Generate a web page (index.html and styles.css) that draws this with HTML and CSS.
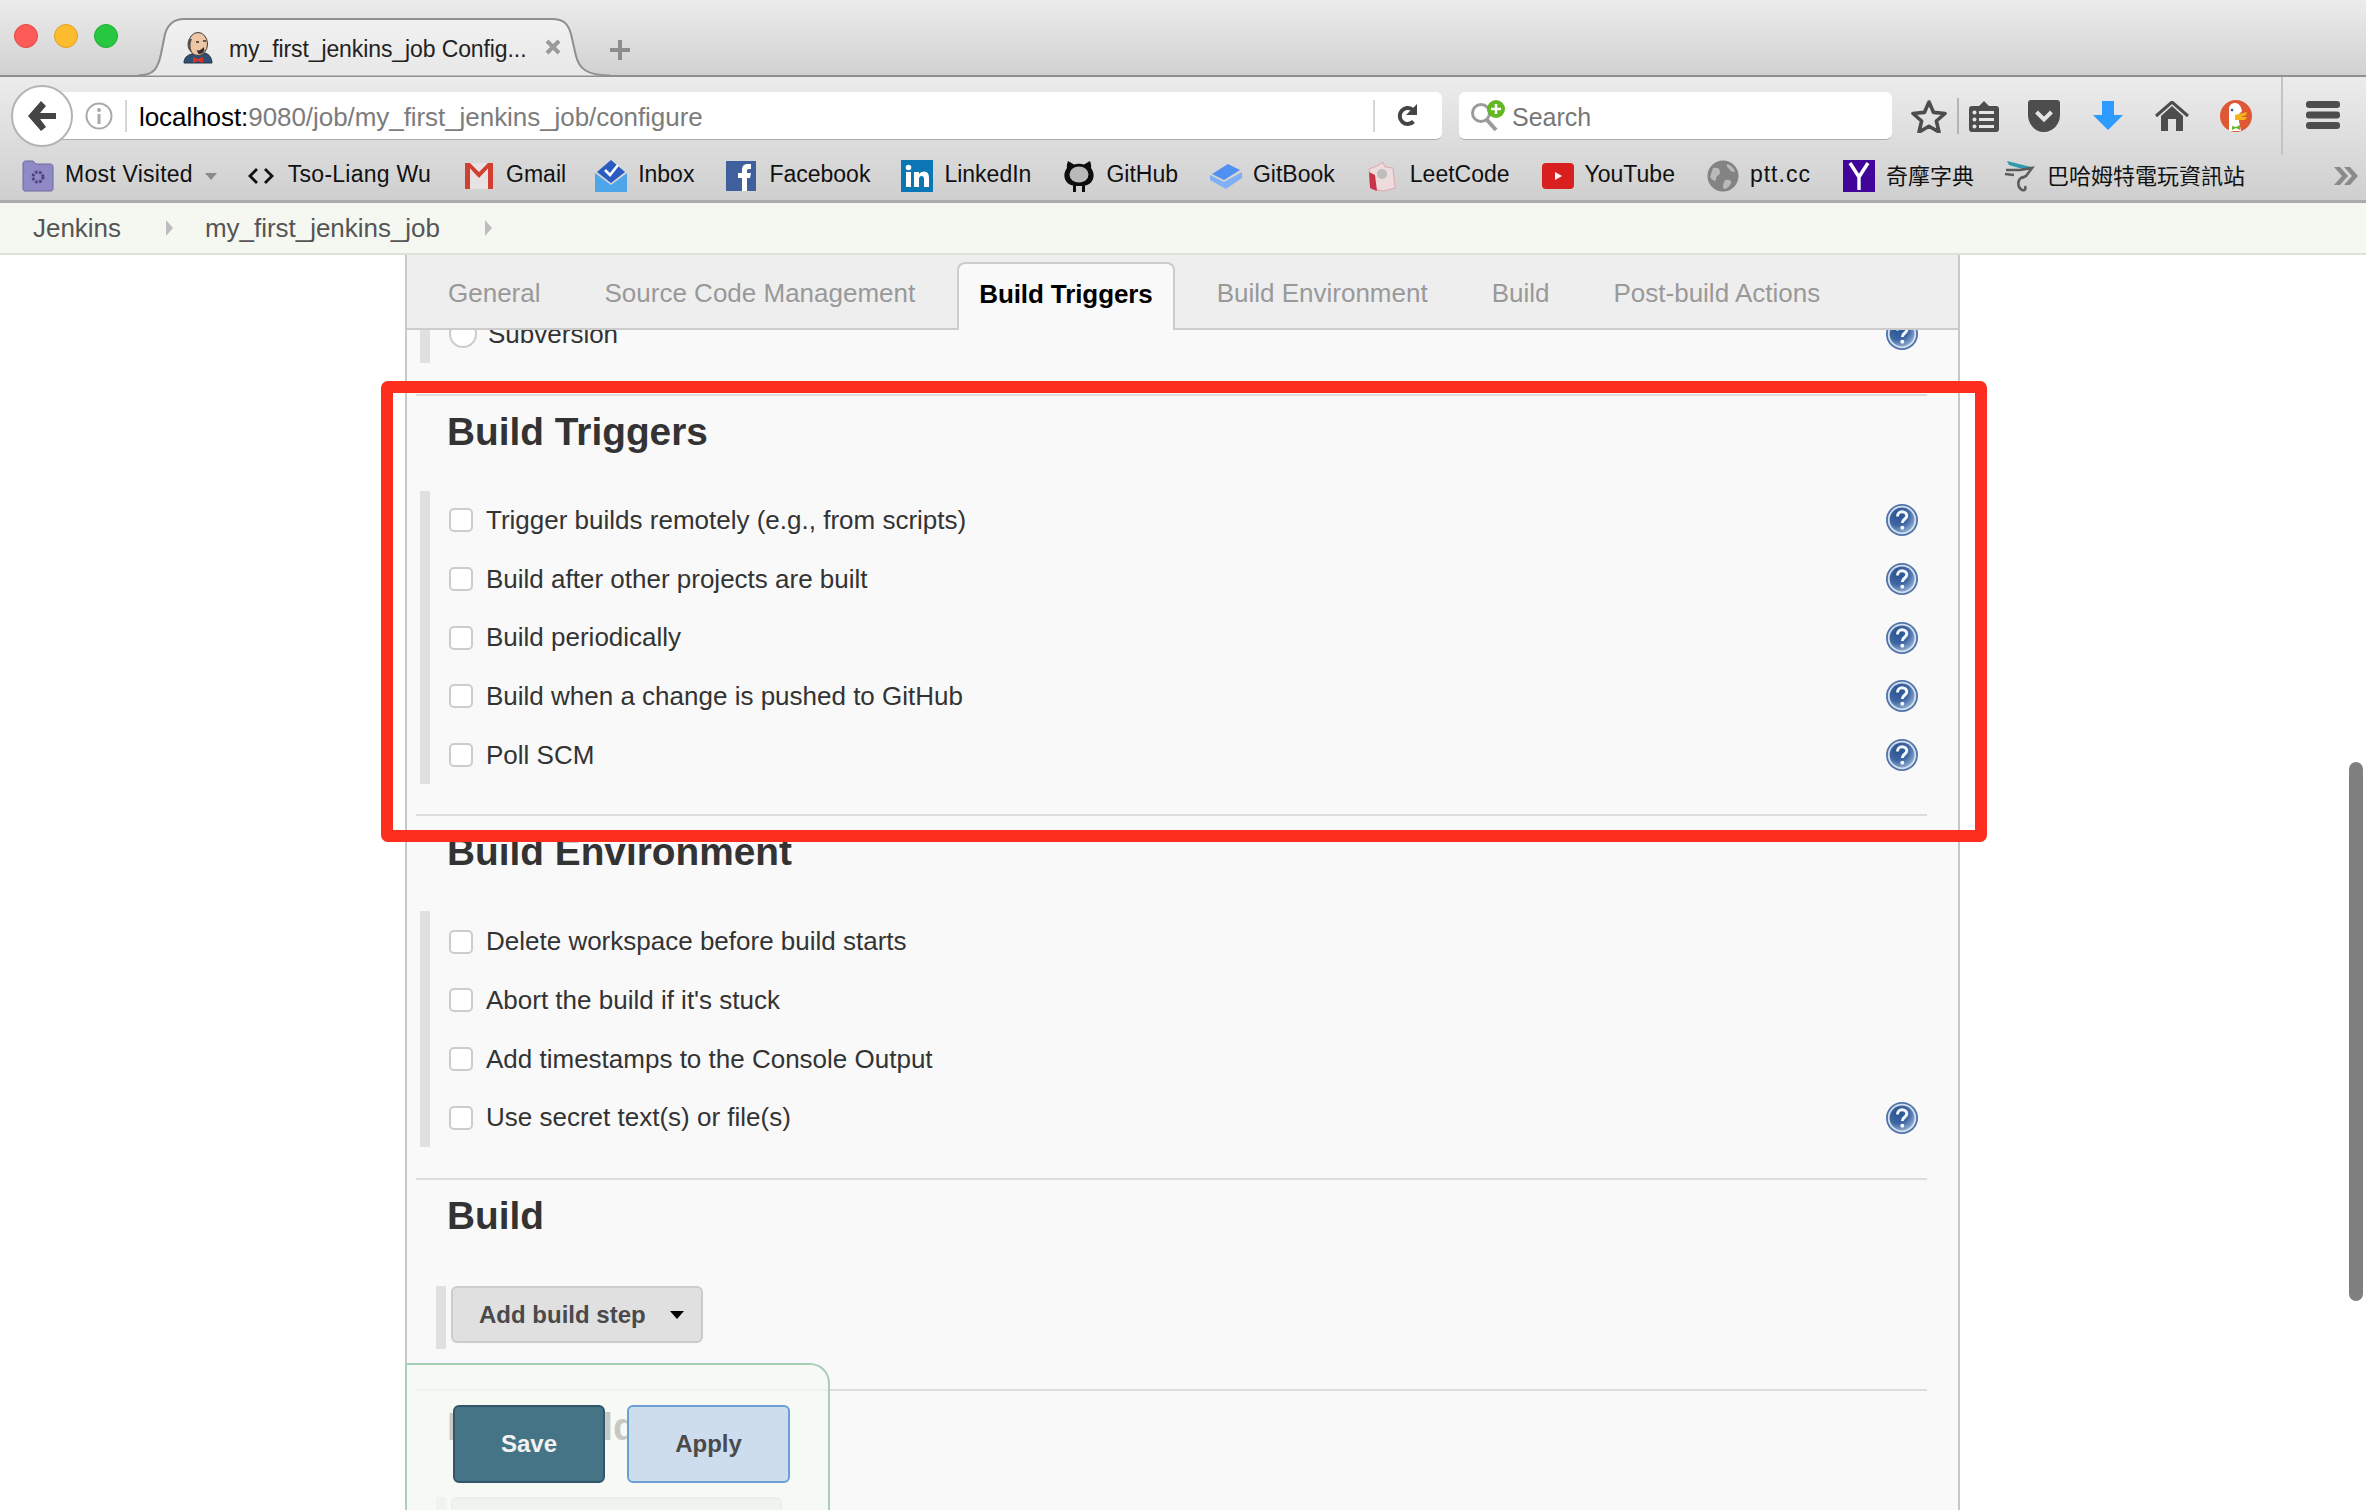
FILE: index.html
```html
<!DOCTYPE html>
<html lang="en">
<head>
<meta charset="UTF-8">
<title>my_first_jenkins_job Config</title>
<link rel="stylesheet" href="styles.css">
</head>
<body>

<svg class="defs" width="0" height="0">
  <defs>
    <radialGradient id="help-fill" cx="35%" cy="30%" r="85%">
      <stop offset="0" stop-color="#2a5391"/>
      <stop offset="0.5" stop-color="#3d66a3"/>
      <stop offset="1" stop-color="#a9c1de"/>
    </radialGradient>
    <linearGradient id="tab-fill" x1="0" y1="0" x2="0" y2="1">
      <stop offset="0" stop-color="#f1f1f1"/>
      <stop offset="1" stop-color="#e8e8e8"/>
    </linearGradient>
    <symbol id="help" viewBox="0 0 32 32">
      <circle cx="16" cy="16" r="16" fill="#4f74aa"/>
      <circle cx="16" cy="16" r="14.200" fill="#d5dfee"/>
      <circle cx="16" cy="16" r="12.400" fill="url(#help-fill)"/>
      <path d="M11.500 12.500c0-3 2-4.800 4.600-4.800 2.700 0 4.700 1.700 4.700 4.100 0 3.500-4.500 3.500-4.500 7.200" fill="none" stroke="#f4f7fb" stroke-width="3"/>
      <circle cx="16.300" cy="23.800" r="2" fill="#f4f7fb"/>
    </symbol>
  </defs>
</svg>

<header class="tabstrip">
  <div class="lights">
    <span class="light red"></span>
    <span class="light yellow"></span>
    <span class="light green"></span>
  </div>
  <div class="tab">
    <svg class="tab-shape" width="472" height="59" viewBox="0 0 472 59">
      <path d="M0 57.500C16 57.500 20 50 23 36L27 16C30 6 36 1 46 1L414 1C426 1 430 6 433 16L438 38C441 50 448 57.500 472 57.500" fill="url(#tab-fill)" stroke="#8f8f8f" stroke-width="2"/>
    </svg>
    <svg class="tab-icon" width="30" height="32" viewBox="0 0 30 32">
      <path d="M1 31c0-5 3-8 8-9l6 1 7-2c4 1 7 5 7 10z" fill="#2f4f72" stroke="#24344a"/>
      <ellipse cx="15" cy="12" rx="9.500" ry="11.500" fill="#eec8a6" stroke="#3d3835"/>
      <path d="M6 7c-2 3-2 8 0 11l3 2c-2-4-2-9 0-13z" fill="#57514d"/>
      <path d="M13 10h3M20 9h3" stroke="#333" stroke-width="1.300"/>
      <path d="M13.500 18c2 1 5 0 7-3l1 3c-1 3-3 4-6 4z" fill="#3a2d2a"/>
      <path d="M10 25l5 2 5-2v6l-5-2-5 2z" fill="#d8322b"/>
    </svg>
    <span class="tab-title">my_first_jenkins_job Config...</span>
    <svg class="tab-close" width="18" height="18" viewBox="0 0 18 18"><path d="M3 3l12 12M15 3L3 15" stroke="#9a9a9a" stroke-width="4"/></svg>
  </div>
  <svg class="newtab" width="26" height="26" viewBox="0 0 26 26"><path d="M13 3v20M3 13h20" stroke="#8c8c8c" stroke-width="4"/></svg>
</header>

<div class="toolbar">
  <nav class="navrow">
    <button class="back">
      <svg width="28" height="30" viewBox="0 0 28 30"><path d="M13 0L0 15l13 15 5-4-6-8h16v-6H12l6-7z" fill="#454545"/></svg>
    </button>
    <div class="urlbar">
      <svg class="info" width="28" height="28" viewBox="0 0 28 28">
        <circle cx="14" cy="14" r="12.500" fill="none" stroke="#a8a8a8" stroke-width="2"/>
        <circle cx="14" cy="8" r="2" fill="#a8a8a8"/>
        <path d="M14 12v10" stroke="#a8a8a8" stroke-width="3"/>
      </svg>
      <span class="url-sep"></span>
      <span class="url"><b>localhost:</b>9080/job/my_first_jenkins_job/configure</span>
      <span class="url-sep right"></span>
      <svg class="reload" width="26" height="26" viewBox="0 0 26 26">
        <path d="M18.500 18.500a8 8 0 1 1-1-12" fill="none" stroke="#454545" stroke-width="4"/>
        <path d="M22 1v11H11z" fill="#454545"/>
      </svg>
    </div>
    <div class="searchbar">
      <svg width="36" height="32" viewBox="0 0 36 32">
        <circle cx="11" cy="13" r="8.500" fill="none" stroke="#9b9b9b" stroke-width="3"/>
        <path d="M17 20l9 10" stroke="#9b9b9b" stroke-width="4"/>
        <circle cx="26" cy="9" r="9" fill="#63b822"/>
        <path d="M26 4v10M21 9h10" stroke="#fff" stroke-width="2.500"/>
      </svg>
      <span>Search</span>
    </div>
    <span class="tool star">
      <svg width="36" height="34" viewBox="0 0 36 34"><path d="M18 3l4.600 10.400 11.400 1.100-8.600 7.500 2.600 11-10-5.800-10 5.800 2.600-11L2 14.500l11.400-1.100z" fill="none" stroke="#4d4d4d" stroke-width="3.600" stroke-linejoin="round"/></svg>
    </span>
    <span class="tool-sep"></span>
    <span class="tool reading">
      <svg width="30" height="32" viewBox="0 0 30 32">
        <path d="M3 6h7l5-5 5 5h7a3 3 0 0 1 3 3v20a3 3 0 0 1-3 3H3a3 3 0 0 1-3-3V9a3 3 0 0 1 3-3z" fill="#4d4d4d"/>
        <path d="M10 11h15v3H10zM10 18h15v3H10zM10 25h15v3H10z" fill="#e4e4e4"/>
        <circle cx="5.500" cy="12.500" r="2" fill="#e4e4e4"/><circle cx="5.500" cy="19.500" r="2" fill="#e4e4e4"/><circle cx="5.500" cy="26.500" r="2" fill="#e4e4e4"/>
      </svg>
    </span>
    <span class="tool">
      <svg width="32" height="32" viewBox="0 0 32 32">
        <path d="M3 0h26a3 3 0 0 1 3 3v12c0 9-7 17-16 17S0 24 0 15V3a3 3 0 0 1 3-3z" fill="#4d4d4d"/>
        <path d="M8.500 12l7.500 7.500 7.500-7.500" fill="none" stroke="#e4e4e4" stroke-width="4"/>
      </svg>
    </span>
    <span class="tool">
      <svg width="30" height="30" viewBox="0 0 30 30"><path d="M9 0h12v14h9L15 29 0 14h9z" fill="#2d9bff"/></svg>
    </span>
    <span class="tool">
      <svg width="34" height="30" viewBox="0 0 34 30">
        <path d="M1 15L17 1l16 14" fill="none" stroke="#4d4d4d" stroke-width="3"/>
        <path d="M6 15L17 5l11 10v15h-7V18h-8v12H6z" fill="#4d4d4d"/>
      </svg>
    </span>
    <span class="tool">
      <svg width="32" height="32" viewBox="0 0 32 32">
        <ellipse cx="16" cy="16" rx="16" ry="16" fill="#de5833"/>
        <path d="M9 31V9c0-4 3-6 6-6 4 0 6 3 7 8l-3 3v7l2 10z" fill="#fff"/>
        <path d="M15 15l12-3-1 3-5 2 6 0-2 3-10 0z" fill="#f5b21b"/>
        <path d="M12 26l4 1 4-2v5l-4-2-4 2z" fill="#6ab72f"/>
        <circle cx="12" cy="10" r="1.300" fill="#2d4f8e"/>
      </svg>
    </span>
    <span class="tool-sep tall"></span>
    <span class="tool menu">
      <svg width="34" height="28" viewBox="0 0 34 28">
        <rect width="34" height="7" rx="3" fill="#4d4d4d"/><rect y="10.500" width="34" height="7" rx="3" fill="#4d4d4d"/><rect y="21" width="34" height="7" rx="3" fill="#4d4d4d"/>
      </svg>
    </span>
  </nav>

  <div class="bookmarks">
    <a class="bm roomy">
      <svg width="32" height="32" viewBox="0 0 32 32">
        <path d="M1 4c0-2 1-3 3-3h7l3 3h14c2 0 3 1 3 3v22c0 1-1 2-2 2H3c-1 0-2-1-2-2z" fill="#8f8ac6" stroke="#6d689f"/>
        <circle cx="16" cy="17" r="5" fill="none" stroke="#4a4578" stroke-width="3" stroke-dasharray="2.500 1.500"/>
      </svg>
      <span>Most Visited</span>
      <i class="caret-small"></i>
    </a>
    <a class="bm roomy code">
      <svg width="28" height="20" viewBox="0 0 28 20"><path d="M10 3l-7 7 7 7M18 3l7 7-7 7" fill="none" stroke="#111" stroke-width="2.800"/></svg>
      <span>Tso-Liang Wu</span>
    </a>
    <a class="bm gmail">
      <svg width="32" height="28" viewBox="0 0 32 28">
        <path d="M2 1h28v26H2z" fill="#e8e3e3"/>
        <path d="M2 1h5v26H2zM25 1h5v26h-5z" fill="#d23f31"/>
        <path d="M2 1h5l9 9 9-9h5L16 16z" fill="#d23f31"/>
      </svg>
      <span>Gmail</span>
    </a>
    <a class="bm">
      <svg width="32" height="32" viewBox="0 0 32 32">
        <path d="M16 0l14 12-14 11L2 12z" fill="#2a5bc0"/>
        <path d="M10 10l5 5 8-10" fill="none" stroke="#fff" stroke-width="2.600"/>
        <path d="M0 13l16 12 16-12v19H0z" fill="#4da5ea"/>
      </svg>
      <span>Inbox</span>
    </a>
    <a class="bm fb">
      <svg width="32" height="30" viewBox="0 0 32 30">
        <rect width="30" height="30" fill="#3f5f9f"/>
        <path d="M16 30V17h-4v-5h4V9c0-4 2-6 6-6h3v5h-2c-2 0-2 1-2 2v2h4l-1 5h-3v13z" fill="#fff"/>
      </svg>
      <span>Facebook</span>
    </a>
    <a class="bm">
      <svg width="32" height="32" viewBox="0 0 32 32">
        <rect width="32" height="32" fill="#0a76b4"/>
        <rect x="5" y="12" width="5" height="15" fill="#fff"/><circle cx="7.500" cy="7.500" r="2.800" fill="#fff"/>
        <path d="M13 12h5v2c1-1.500 3-2.500 5-2.500 4 0 5 3 5 6.500v9h-5v-8c0-2-1-3-2.500-3S18 17 18 19v8h-5z" fill="#fff"/>
      </svg>
      <span>LinkedIn</span>
    </a>
    <a class="bm">
      <svg width="32" height="32" viewBox="0 0 32 32">
        <path d="M5 1l6 3.500c3-1 7-1 10 0L27 1c1 3 1.500 5 1 7 3 4 3.500 9 1 13-1.500 2.500-4 4-7 4.500V32h-3v-6h-6v6h-3v-6.500c-3-.5-5.500-2-7-4.500-2.500-4-2-9 1-13-.5-2 0-4 1-7z" fill="#0d0d0d"/>
        <ellipse cx="16" cy="14.500" rx="9.500" ry="8" fill="#b9b9b9"/>
      </svg>
      <span>GitHub</span>
    </a>
    <a class="bm">
      <svg width="32" height="28" viewBox="0 0 32 28">
        <path d="M2 12L18 2l12 6-16 10z" fill="#4f90f2"/>
        <path d="M0 13l14 7 18-10v6L16 27 0 18z" fill="#7fb0f5"/>
      </svg>
      <span>GitBook</span>
    </a>
    <a class="bm">
      <svg width="32" height="32" viewBox="0 0 32 32">
        <path d="M2 9l8-3 6-4 2 5 8 1 2 20-12 3-12-2z" fill="#eedcdd" stroke="#dca9b0"/>
        <path d="M2 12l6 3 2 16-7-3z" fill="#c9334a"/>
        <circle cx="15" cy="14" r="5" fill="#bdbdbd"/>
      </svg>
      <span>LeetCode</span>
    </a>
    <a class="bm">
      <svg width="32" height="26" viewBox="0 0 32 26">
        <rect width="32" height="26" rx="4" fill="#d8201f"/>
        <path d="M13 9l7 4-7 4z" fill="#fff"/>
      </svg>
      <span>YouTube</span>
    </a>
    <a class="bm ptt">
      <svg width="32" height="32" viewBox="0 0 32 32">
        <circle cx="16" cy="16" r="15.500" fill="#838383"/>
        <path d="M6 8c4-1 7 0 7 4s-4 3-4 7-4 1-6-2zM20 4c4 1 7 4 8 8-3 0-5-1-6-3s-3-2-2-5zM18 20c3-1 7 0 6 3s-3 5-6 6-2-6 0-9z" fill="#b9b9b9"/>
      </svg>
      <span>ptt.cc</span>
    </a>
    <a class="bm cjk dict">
      <svg width="32" height="32" viewBox="0 0 32 32">
        <rect width="32" height="32" fill="#41059a"/>
        <path d="M7 3l9 14 9-14M16 16v14" fill="none" stroke="#fff" stroke-width="3.400"/>
      </svg>
      <span>奇摩字典</span>
    </a>
    <a class="bm cjk">
      <svg width="32" height="32" viewBox="0 0 32 32">
        <path d="M3 1l24 6-5 3L5 5z" fill="#3298ab"/>
        <path d="M2 10h14l12-2-6 8-4 2M1 14l9 1M19 17c-6 2-6 10-1 13 3 1 4-1 3-4" fill="none" stroke="#5c5c5c" stroke-width="2.600"/>
      </svg>
      <span>巴哈姆特電玩資訊站</span>
    </a>
    <svg class="more" width="26" height="20" viewBox="0 0 26 20"><path d="M1 1l8 9-8 9h6l8-9-8-9zM11 1l8 9-8 9h6l8-9-8-9z" fill="#8a8a8a"/></svg>
  </div>
</div>

<div class="crumbs">
  <a>Jenkins</a>
  <i class="crumb-arrow"></i>
  <a>my_first_jenkins_job</a>
  <i class="crumb-arrow"></i>
</div>

<main class="panel">
  <ul class="tabs">
    <li>General</li>
    <li>Source Code Management</li>
    <li class="active">Build Triggers</li>
    <li>Build Environment</li>
    <li>Build</li>
    <li>Post-build Actions</li>
  </ul>

  <div class="block cut">
    <div class="row scrolled">
      <input type="radio" class="radio">
      <label>Subversion</label>
      <svg class="help"><use href="#help"/></svg>
    </div>
  </div>

  <section class="sec">
    <h2>Build Triggers</h2>
    <div class="block">
      <div class="row"><input type="checkbox"><label>Trigger builds remotely (e.g., from scripts)</label><svg class="help"><use href="#help"/></svg></div>
      <div class="row"><input type="checkbox"><label>Build after other projects are built</label><svg class="help"><use href="#help"/></svg></div>
      <div class="row"><input type="checkbox"><label>Build periodically</label><svg class="help"><use href="#help"/></svg></div>
      <div class="row"><input type="checkbox"><label>Build when a change is pushed to GitHub</label><svg class="help"><use href="#help"/></svg></div>
      <div class="row"><input type="checkbox"><label>Poll SCM</label><svg class="help"><use href="#help"/></svg></div>
    </div>
  </section>

  <section class="sec env">
    <h2>Build Environment</h2>
    <div class="block">
      <div class="row"><input type="checkbox"><label>Delete workspace before build starts</label></div>
      <div class="row"><input type="checkbox"><label>Abort the build if it's stuck</label></div>
      <div class="row"><input type="checkbox"><label>Add timestamps to the Console Output</label></div>
      <div class="row"><input type="checkbox"><label>Use secret text(s) or file(s)</label><svg class="help"><use href="#help"/></svg></div>
    </div>
  </section>

  <section class="sec steps">
    <h2>Build</h2>
    <div class="block step">
      <button class="add">Add build step<i class="caret"></i></button>
    </div>
  </section>

  <section class="sec steps">
    <h2>Post-build Actions</h2>
    <div class="block step">
      <button class="add wide">Add post-build action<i class="caret"></i></button>
    </div>
  </section>
</main>

<!-- things lying over the page -->
<div class="savebar">
  <button class="btn save">Save</button>
  <button class="btn apply">Apply</button>
</div>
<div class="scrollthumb"></div>
<div class="callout"></div>

</body>
</html>
```

FILE: styles.css
```css
/* Page frame */
html, body {
  margin: 0;
  height: 100%;
}

body {
  position: relative;
  width: 2366px;
  height: 1510px;
  overflow: hidden;
  background: #fff;
  font-family: "Liberation Sans", "Noto Sans CJK TC", sans-serif;
  color: #333;
}

svg {
  flex-shrink: 0;
  display: block;
}

.defs {
  position: absolute;
}

/* Browser tab strip */
.tabstrip {
  display: flex;
  align-items: center;
  height: 75px;
  box-sizing: content-box;
  padding-left: 14px;
  border-bottom: 2px solid #8f8f8f;
  background: linear-gradient(#ececec, #d1d1d1);
}

.lights {
  display: flex;
  gap: 16px;
  margin-top: -3px;
}

.light {
  width: 24px;
  height: 24px;
  border-radius: 50%;
  box-sizing: border-box;
}

.light.red { background: #fc5b57; border: 1px solid #e5463f; }
.light.yellow { background: #fdbc2e; border: 1px solid #e0a024; }
.light.green { background: #27c83f; border: 1px solid #1fae32; }

.tab {
  position: relative;
  display: flex;
  align-items: center;
  width: 472px;
  height: 77px;
  margin-left: 20px;
  padding: 18px 48px 0 45px;
  box-sizing: border-box;
  margin-bottom: -2px;
}

.tab-shape {
  position: absolute;
  left: 0;
  top: 18px;
}

.tab-icon, .tab-title, .tab-close {
  position: relative;
}

.tab-icon {
  margin-top: 0;
}

.tab-title {
  margin-left: 16px;
  margin-top: 3px;
  font-size: 23px;
  letter-spacing: -0.1px;
  color: #222;
  white-space: nowrap;
}

.tab-close {
  margin-left: auto;
  margin-top: -2px;
}

.newtab {
  margin-left: -3px;
  margin-top: 24px;
}

/* Toolbar and bookmarks */
.toolbar {
  height: 123px;
  background: linear-gradient(#ececec, #cfcfcf);
  border-bottom: 3px solid #ababab;
}

.navrow {
  display: flex;
  align-items: center;
  height: 78px;
}

.back {
  position: relative;
  z-index: 1;
  display: flex;
  align-items: center;
  justify-content: center;
  width: 62px;
  height: 62px;
  margin-left: 11px;
  padding: 0;
  background: #fff;
  border: 2px solid #b4b4b4;
  border-radius: 50%;
}

.urlbar {
  display: flex;
  align-items: center;
  width: 1392px;
  height: 48px;
  margin-left: -23px;
  background: #fff;
  border-bottom: 1px solid #adadad;
  box-sizing: border-box;
  border-radius: 0 6px 6px 0;
}

.info {
  margin-left: 35px;
}

.url-sep {
  width: 2px;
  height: 32px;
  margin-left: 12px;
  background: #d5d5d5;
}

.url-sep.right {
  margin-left: auto;
}

.url {
  margin: 3px 0 0 12px;
  font-size: 26px;
  letter-spacing: -0.06px;
  color: #7c7c7c;
  white-space: nowrap;
}

.url b {
  font-weight: normal;
  color: #000;
}

.reload {
  margin: 0 21px 0 20px;
}

.searchbar {
  display: flex;
  align-items: center;
  gap: 6px;
  width: 433px;
  height: 48px;
  margin-left: 17px;
  padding-left: 11px;
  box-sizing: border-box;
  background: #fff;
  border-bottom: 1px solid #adadad;
  border-radius: 6px;
  font-size: 25px;
  color: #777;
}

.searchbar span {
  margin-top: 3px;
}

.tool {
  display: flex;
  align-items: center;
  justify-content: center;
  width: 64px;
}

.tool.star {
  width: 40px;
  margin-left: 17px;
}

.tool.reading {
  width: 50px;
  margin-right: 3px;
}

.tool.menu {
  width: 80px;
  margin-top: -2px;
}

.tool-sep {
  width: 2px;
  height: 36px;
  margin-left: 8px;
  background: #b5b5b5;
}

.tool-sep.tall {
  height: 78px;
  margin-left: 13px;
  background: #c4c4c4;
}

.bookmarks {
  display: flex;
  align-items: center;
  gap: 32px;
  height: 42px;
  padding-left: 22px;
  font-size: 23px;
  color: #111;
  white-space: nowrap;
}

.bm {
  display: flex;
  align-items: center;
  gap: 11px;
}

.bm span {
  margin-top: -3px;
}

.bm.roomy {
  letter-spacing: 0.25px;
}

.bm.code {
  gap: 13px;
  margin-left: -2px;
}

.bm.gmail {
  margin-right: -3px;
}

.bm.fb {
  margin-right: -1px;
}

.bm.ptt {
  letter-spacing: 1px;
}

.bm.cjk {
  font-size: 22px;
}

.bm.cjk span {
  margin-top: -5px;
}

.bm.dict {
  margin-right: -2px;
}

.caret-small {
  width: 0;
  height: 0;
  margin-left: 1px;
  border: 6px solid transparent;
  border-top: 7px solid #8a8a8a;
  border-bottom: 0;
}

.more {
  margin-left: 56px;
}

/* Jenkins breadcrumb */
.crumbs {
  display: flex;
  align-items: center;
  height: 50px;
  padding-left: 33px;
  background: #f5f8f1;
  border-bottom: 2px solid #dde0d8;
  font-size: 26px;
  letter-spacing: -0.03px;
  color: #555;
}

.crumb-arrow {
  width: 0;
  height: 0;
  margin: 0 32px 0 45px;
  border-style: solid;
  border-width: 8px 0 8px 7px;
  border-color: transparent transparent transparent #bdbdbd;
}

/* Config panel */
.panel {
  width: 1555px;
  height: 1256px;
  margin-left: 405px;
  box-sizing: border-box;
  overflow: hidden;
  background: #f9f9f9;
  border-left: 2px solid #c8c8c8;
  border-right: 2px solid #c8c8c8;
}

.tabs {
  display: flex;
  align-items: flex-end;
  gap: 20px;
  height: 73px;
  margin: 0;
  padding: 0 0 0 19px;
  list-style: none;
  background: #eee;
  border-bottom: 2px solid #ccc;
  font-size: 26px;
  color: #999;
}

.tabs li {
  display: flex;
  align-items: center;
  height: 70px;
  padding: 0 22px;
}

.tabs li.active {
  box-sizing: border-box;
  margin-bottom: -2px;
  height: 68px;
  padding: 0 20px 6px;
  color: #000;
  font-weight: bold;
  letter-spacing: -0.1px;
  background: #f9f9f9;
  border: 2px solid #ccc;
  border-bottom: 0;
  border-radius: 8px 8px 0 0;
}

.block {
  margin-left: 13px;
  border-left: 10px solid #e0e0e0;
}

.block.cut {
  height: 33px;
  overflow: hidden;
}

.row {
  display: flex;
  align-items: center;
  height: 58.7px;
  padding-left: 19px;
  font-size: 26px;
}

.row.scrolled {
  margin-top: -25px;
}

.row label {
  margin-left: 13px;
  white-space: nowrap;
}

.row input {
  appearance: none;
  flex-shrink: 0;
  width: 24px;
  height: 24px;
  margin: 0;
  box-sizing: border-box;
  background: #fff;
  border: 2px solid #ccc;
  border-radius: 5px;
}

.row input.radio {
  width: 28px;
  height: 28px;
  margin-right: -2px;
  border-radius: 50%;
}

.help {
  width: 32px;
  height: 32px;
  margin-left: auto;
  margin-right: 40px;
}

.sec {
  margin-top: 31px;
}

.sec.env {
  margin-top: 30px;
}

.sec.env .block {
  padding-top: 1px;
}

.sec::before {
  content: "";
  display: block;
  height: 2px;
  margin: 0 31px 0 9px;
  background: #ddd;
}

.sec h2 {
  margin: 0 0 23px;
  padding-left: 40px;
  font-size: 38.8px;
  line-height: 72px;
  color: #333;
}

.sec.steps {
  padding-bottom: 9px;
}

.sec.steps h2 {
  margin-bottom: 34px;
}

.block.step {
  display: flex;
  margin-left: 29px;
  padding: 0 0 6px 5px;
}

.add {
  display: flex;
  align-items: center;
  width: 252px;
  height: 57px;
  padding: 0 0 0 26px;
  box-sizing: border-box;
  background: #e0e0e0;
  border: 2px solid #ccc;
  border-radius: 6px;
  font: bold 24px "Liberation Sans", sans-serif;
  color: #4a4a4a;
  white-space: nowrap;
}

.add.wide {
  width: 331px;
}

.caret {
  width: 0;
  height: 0;
  margin-left: 24px;
  border-style: solid;
  border-width: 8px 7px 0;
  border-color: #000 transparent transparent;
}

/* Sticky save bar, over the form */
.savebar {
  position: absolute;
  left: 405px;
  bottom: 0;
  display: flex;
  gap: 22px;
  width: 425px;
  height: 147px;
  padding: 40px 0 0 46px;
  box-sizing: border-box;
  background: rgba(246, 248, 242, 0.76);
  border: 2px solid #a8cfb8;
  border-bottom: 0;
  border-top-right-radius: 20px;
}

.btn {
  height: 78px;
  box-sizing: border-box;
  border-radius: 6px;
  font: bold 24px "Liberation Sans", sans-serif;
}

.btn.save {
  width: 152px;
  background: #457486;
  border: 2px solid #34566b;
  color: #f2f2f2;
}

.btn.apply {
  width: 163px;
  background: #cdddee;
  border: 2px solid #6a9fd8;
  color: #4a4a4a;
}

.scrollthumb {
  position: absolute;
  left: 2349px;
  top: 762px;
  width: 14px;
  height: 539px;
  background: #7f7f7f;
  border-radius: 7px;
}

/* Red annotation box */
.callout {
  position: absolute;
  left: 381px;
  top: 381px;
  width: 1606px;
  height: 461px;
  box-sizing: border-box;
  border: 12px solid #fe2e1f;
  border-radius: 7px;
}
```
